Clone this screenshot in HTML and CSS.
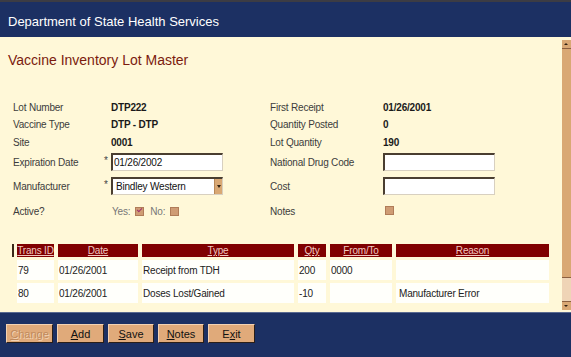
FILE: index.html
```html
<!DOCTYPE html>
<html lang="en">
<head>
    <meta charset="UTF-8">
    <title>Vaccine Inventory Lot Master</title>
    <link rel="stylesheet" href="styles.css">
</head>
<body>
    <div class="topline"></div>
    <header class="banner">Department of State Health Services</header>

    <div class="frame">
        <main class="content">
            <h1 class="title">Vaccine Inventory Lot Master</h1>

            <div class="form">
                <span class="lbl">Lot Number</span><span></span><span class="val">DTP222</span>
                <span class="lbl">First Receipt</span><span class="val">01/26/2001</span>

                <span class="lbl">Vaccine Type</span><span></span><span class="val">DTP - DTP</span>
                <span class="lbl">Quantity Posted</span><span class="val">0</span>

                <span class="lbl">Site</span><span></span><span class="val">0001</span>
                <span class="lbl">Lot Quantity</span><span class="val">190</span>

                <span class="lbl">Expiration Date</span><span class="req">*</span>
                <span><span class="field">01/26/2002</span></span>
                <span class="lbl">National Drug Code</span><span><span class="field"></span></span>

                <span class="lbl">Manufacturer</span><span class="req">*</span>
                <span><span class="field select">Bindley Western<span class="drop"></span></span></span>
                <span class="lbl">Cost</span><span><span class="field"></span></span>

                <span class="lbl">Active?</span><span></span>
                <span class="lbl checks">Yes: <span class="box checked"></span> No: <span class="box"></span></span>
                <span class="lbl">Notes</span><span><span class="box notes"></span></span>
            </div>

            <table class="trans">
                <colgroup>
                    <col style="width:37px"><col style="width:80px"><col style="width:152px">
                    <col style="width:28px"><col style="width:62px"><col style="width:153px">
                </colgroup>
                <thead>
                    <tr>
                        <th class="first">Trans ID</th>
                        <th>Date</th>
                        <th>Type</th>
                        <th>Qty</th>
                        <th>From/To</th>
                        <th>Reason</th>
                    </tr>
                </thead>
                <tbody>
                    <tr>
                        <td>79</td><td>01/26/2001</td><td>Receipt from TDH</td>
                        <td>200</td><td>0000</td><td></td>
                    </tr>
                    <tr>
                        <td>80</td><td>01/26/2001</td><td>Doses Lost/Gained</td>
                        <td>-10</td><td></td><td>Manufacturer Error</td>
                    </tr>
                </tbody>
            </table>
        </main>

        <!-- fake scroll bar -->
        <div class="scrollbar">
            <span class="arrow up"></span>
            <span class="thumb"></span>
            <span class="track"></span>
            <span class="arrow down"></span>
        </div>
    </div>

    <footer class="toolbar">
        <button class="btn disabled w47"><u>C</u>hange</button>
        <button class="btn w47"><u>A</u>dd</button>
        <button class="btn w46"><u>S</u>ave</button>
        <button class="btn w46"><u>N</u>otes</button>
        <button class="btn w47">E<u>x</u>it</button>
    </footer>
</body>
</html>
```

FILE: styles.css
```css
/* Page frame */
body {
    margin: 0;
    width: 571px;
    height: 357px;
    overflow: hidden;
    font-family: "Liberation Sans", Arial, sans-serif;
    font-size: 10px;
    letter-spacing: -0.2px;
    color: #222;
    background: #fff8d8;
}

.topline {
    height: 2px;
    background: #3c3c44;
}

.banner {
    height: 35px;
    box-sizing: border-box;
    padding: 12px 0 0 8px;
    background: #1c3063;
    color: #fff;
    font-size: 13px;
    letter-spacing: 0;
    line-height: 16px;
}

/* Content + scroll bar */
.frame {
    display: flex;
    height: 275px;
    background: #fff8d8;
}

.content {
    flex: 1;
    padding-top: 14px;
}

.title {
    margin: 0 0 29px 8px;
    font-size: 14px;
    font-weight: normal;
    letter-spacing: 0;
    line-height: 18px;
    color: #7b1b0e;
}

/* Form grid */
.form {
    display: grid;
    grid-template-columns: 91px 7px 159px 113px 120px;
    grid-template-rows: 18px 17px 18px 22px 26px 24px;
    align-items: center;
    margin-left: 13px;
}

.lbl {
    color: #3c3c3c;
}

.val {
    font-weight: bold;
    color: #1a1a1a;
}

.req {
    color: #444;
    font-size: 10px;
    position: relative;
    top: -2px;
}

.field {
    display: flex;
    align-items: center;
    width: 112px;
    height: 18px;
    box-sizing: border-box;
    padding-left: 1px;
    background: #fff;
    border-style: solid;
    border-width: 2px 1px 1px 2px;
    border-color: #4a3e30 #d8d0c0 #d8d0c0 #4a3e30;
    color: #111;
    font-size: 10px;
}

.select {
    position: relative;
    padding-left: 3px;
}

.drop {
    position: absolute;
    right: 0;
    top: 0;
    bottom: 0;
    width: 7px;
    background: #d9a874;
    border-left: 1px solid #b88858;
}

.drop::after {
    content: "";
    position: absolute;
    left: 2px;
    top: 6px;
    border-left: 2px solid transparent;
    border-right: 2px solid transparent;
    border-top: 3px solid #302010;
}

.checks {
    display: flex;
    align-items: center;
    padding-left: 1px;
    color: #777;
}

.box {
    display: inline-block;
    width: 7px;
    height: 7px;
    background: #cf9c74;
    border: 1px solid #b07c58;
    margin: 0 6px 0 5px;
    position: relative;
}

.box.checked::after {
    content: "";
    position: absolute;
    left: 1px;
    top: 0;
    width: 4px;
    height: 2px;
    border-left: 1px solid #a0306a;
    border-bottom: 1px solid #a0306a;
    transform: rotate(-45deg);
}

.box.notes {
    margin-left: 2px;
}

/* Transactions table */
.trans {
    margin: 18px 0 0 13px;
    table-layout: fixed;
    border-collapse: separate;
    border-spacing: 4px 3px;
}

.trans th {
    height: 13px;
    padding: 0;
    background: #800000;
    color: #f0c8c0;
    font-weight: normal;
    text-decoration: underline;
    line-height: 13px;
    text-align: center;
}

.trans th.first {
    position: relative;
}

.trans th.first::before {
    content: "";
    position: absolute;
    left: -5px;
    top: 0;
    bottom: 0;
    width: 2px;
    background: #3a2818;
}

.trans td {
    height: 20px;
    padding: 0 1px;
    background: #fffffb;
    color: #222;
    white-space: nowrap;
}

.trans td:nth-child(6) {
    padding-left: 3px;
}

.scrollbar {
    display: flex;
    flex-direction: column;
    width: 9px;
    margin: 3px 0 2px;
}

.arrow {
    height: 8px;
    background: #d9a874;
    position: relative;
}

.arrow::after {
    content: "";
    position: absolute;
    left: 2px;
    border-left: 2px solid transparent;
    border-right: 2px solid transparent;
}

.arrow.up {
    border-bottom: 1px solid #8c6040;
}

.arrow.up::after {
    top: 3px;
    border-bottom: 2px solid #302010;
}

.arrow.down {
    border-top: 1px solid #8c6040;
}

.arrow.down::after {
    top: 3px;
    border-top: 2px solid #302010;
}

.thumb {
    height: 228px;
    background: #d9a874;
    border-bottom: 1px solid #8c6040;
}

.track {
    flex: 1;
    background: #efd4b6;
}

/* Bottom toolbar */
.toolbar {
    display: flex;
    gap: 4px;
    height: 45px;
    box-sizing: border-box;
    padding: 11px 0 0 6px;
    background: #1c3063;
    border-top: 1px solid #5a6a90;
}

.btn {
    height: 19px;
    padding: 0;
    background: #e0aa7a;
    border-style: solid;
    border-width: 1px;
    border-color: #f4d2b2 #2a1e18 #2a1e18 #f4d2b2;
    font-family: "Liberation Sans", Arial, sans-serif;
    font-size: 11px;
    color: #111;
}

.btn.disabled {
    color: #c08a5c;
    text-shadow: 1px 1px 0 #f2d2b4;
}

.w47 { width: 47px; }
.w46 { width: 46px; }
```
